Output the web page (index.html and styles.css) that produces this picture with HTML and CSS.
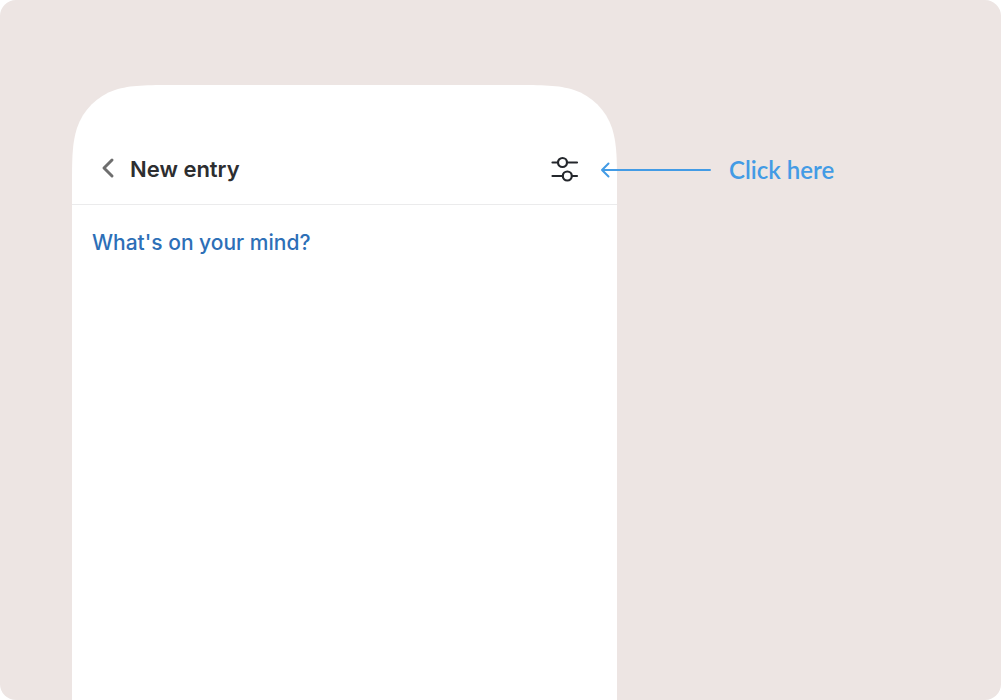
FILE: index.html
```
<!DOCTYPE html>
<html lang="en">
<head>
<meta charset="utf-8">
<meta name="viewport" content="width=device-width, initial-scale=1">
<title>New entry</title>
<link rel="stylesheet" href="styles.css">
</head>
<body>
<main class="stage">
  <section class="phone">
    <div class="phone-top" aria-hidden="true">
      <svg class="corner" viewBox="0 0 104 120"><path d="M104 0C74 0 59 0 43 5C25 11 11 25 5 43C0 59 0 74 0 104V120H104Z"/></svg>
      <div class="phone-fill"></div>
      <svg class="corner" viewBox="0 0 104 120"><path d="M0 0C30 0 45 0 61 5C79 11 93 25 99 43C104 59 104 74 104 104V120H0Z"/></svg>
    </div>
    <header class="bar">
      <button class="icon-button" type="button" aria-label="Back">
        <svg width="14" height="22" viewBox="0 0 14 22"><path class="chevron" d="M11 2L3 10L11 18"/></svg>
      </button>
      <h1 class="title">New entry</h1>
      <button class="icon-button" type="button" aria-label="Entry settings">
        <svg width="28" height="28" viewBox="0 0 28 28"><g class="sliders"><path d="M1.500 7.500H6.500M17 7.500H26M1.500 21H11M21.500 21H26"/><circle cx="11.500" cy="7.500" r="4.500"/><circle cx="16.300" cy="21" r="4.500"/></g></svg>
      </button>
    </header>
    <textarea class="entry" aria-label="Entry" placeholder="What's on your mind?"></textarea>
  </section>
  <aside class="hint">
    <svg class="arrow" width="111" height="18" viewBox="0 0 111 18" aria-hidden="true"><path d="M110 9H2M8.500 2.500L2 9L8.500 15.500"/></svg>
    <span>Click here</span>
  </aside>
</main>
</body>
</html>
```
FILE: styles.css
```
* { box-sizing: border-box; }

body {
  margin: 0;
  background: #fff;
  font-family: Inter, "Liberation Sans", sans-serif;
}

.stage {
  display: flex;
  align-items: stretch;
  min-height: 100vh;
  padding: 85px 72px 0;
  border-radius: 16px;
  background: #ede5e3;
}

.phone {
  display: flex;
  flex-direction: column;
  flex: 0 1 545px;
  min-width: 0;
}

.phone-top { display: flex; }

.corner {
  flex: none;
  width: 104px;
  height: 120px;
  fill: #fff;
}

.phone-fill {
  flex: 1;
  background: #fff;
}

.bar {
  display: flex;
  align-items: center;
  height: 72px;
  margin-top: -72px;
  padding: 0 38px 0 29px;
  border-bottom: 1px solid #ebebec;
}

.icon-button {
  display: flex;
  padding: 0;
  border: 0;
  background: none;
}

.icon-button svg {
  fill: none;
  overflow: visible;
  stroke-linecap: round;
  stroke-linejoin: round;
}

.chevron {
  stroke: #6e6e6e;
  stroke-width: 3;
}

.sliders {
  stroke: #24272c;
  stroke-width: 2.2;
}

.title {
  flex: 1;
  margin: 0;
  padding-left: 15px;
  color: #2d2e30;
  font-size: 22px;
  font-weight: 600;
  line-height: 32px;
}

.entry {
  flex: 1;
  width: 100%;
  padding: 22px 20px;
  border: 0;
  outline: 0;
  resize: none;
  background: #fff;
  color: #2d6fb7;
  font-family: inherit;
  font-size: 21px;
  font-weight: 500;
  line-height: 32px;
}

.entry::placeholder {
  color: #2d6fb7;
  opacity: 1;
}

.hint {
  position: relative;
  display: flex;
  align-items: center;
  align-self: flex-start;
  gap: 18px;
  margin: 69px 0 0 -17px;
  color: #439be5;
  font-family: Lato, sans-serif;
  font-size: 24px;
  font-weight: 600;
  line-height: 32px;
  white-space: nowrap;
}

.arrow {
  fill: none;
  stroke: #439be5;
  stroke-width: 2;
  stroke-linecap: round;
  stroke-linejoin: round;
}
```
